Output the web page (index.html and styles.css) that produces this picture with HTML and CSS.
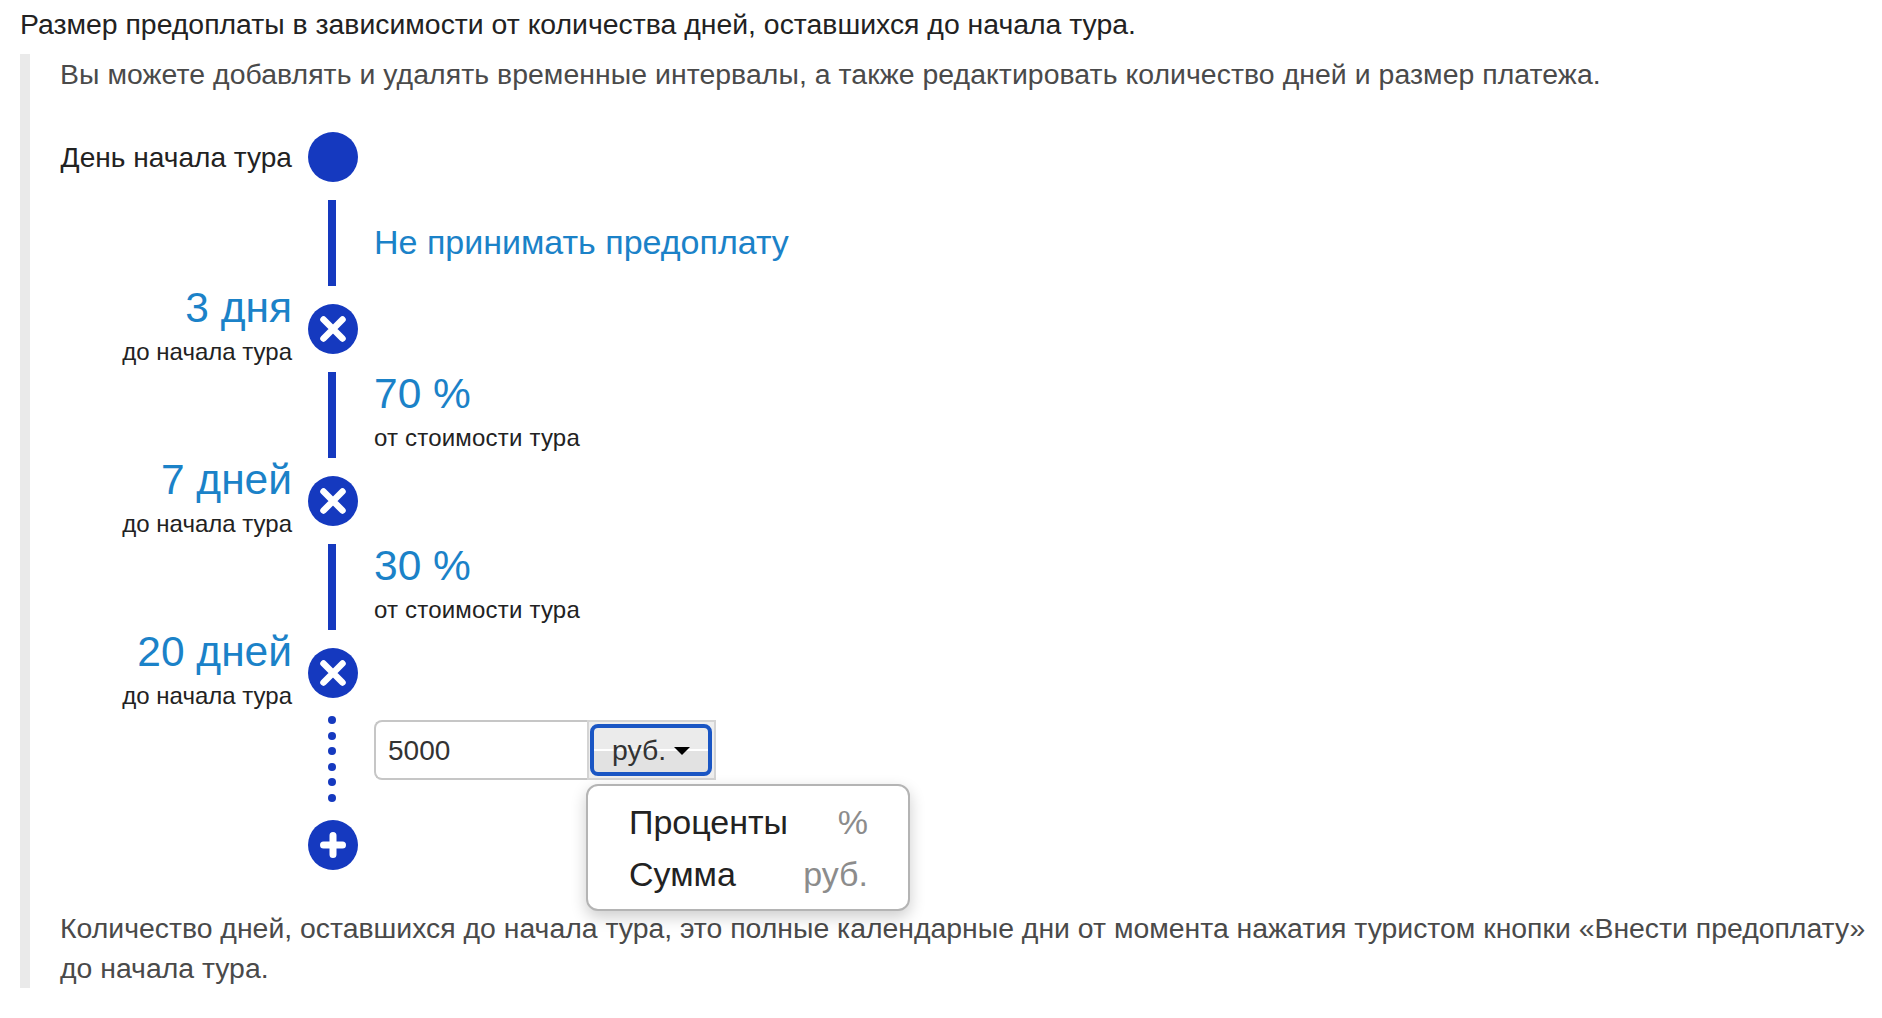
FILE: index.html
```html
<!DOCTYPE html>
<html lang="ru">
<head>
<meta charset="utf-8">
<title>Предоплата</title>
<link rel="stylesheet" href="styles.css">
</head>
<body>
<p class="lead">Размер предоплаты в зависимости от количества дней, оставшихся до начала тура.</p>
<div class="note">
  <p class="note-text note-intro">Вы можете добавлять и удалять временные интервалы, а также редактировать количество дней и размер платежа.</p>
  <div class="timeline">
    <div class="label"><span class="start-label">День начала тура</span></div>
    <div class="dot"></div>
    <div></div>

    <div></div>
    <div class="bar"></div>
    <div class="value"><a class="big-link small-link">Не принимать предоплату</a></div>

    <div class="label"><a class="big-link">3 дня</a><span class="sub">до начала тура</span></div>
    <div class="dot"><svg viewBox="0 0 50 50" class="icon"><path d="M15.500 15.500 34.500 34.500M34.500 15.500 15.500 34.500"/></svg></div>
    <div></div>

    <div></div>
    <div class="bar"></div>
    <div class="value"><a class="big-link">70 %</a><span class="sub sub-wide">от стоимости тура</span></div>

    <div class="label"><a class="big-link">7 дней</a><span class="sub">до начала тура</span></div>
    <div class="dot"><svg viewBox="0 0 50 50" class="icon"><path d="M15.500 15.500 34.500 34.500M34.500 15.500 15.500 34.500"/></svg></div>
    <div></div>

    <div></div>
    <div class="bar"></div>
    <div class="value"><a class="big-link">30 %</a><span class="sub sub-wide">от стоимости тура</span></div>

    <div class="label"><a class="big-link">20 дней</a><span class="sub">до начала тура</span></div>
    <div class="dot"><svg viewBox="0 0 50 50" class="icon"><path d="M15.500 15.500 34.500 34.500M34.500 15.500 15.500 34.500"/></svg></div>
    <div></div>

    <div></div>
    <div class="dots"><i></i><i></i><i></i><i></i><i></i><i></i></div>
    <div class="value">
      <div class="control">
        <div class="field">5000</div>
        <div class="select-wrap"><div class="select">руб.<span class="caret"></span></div></div>
        <div class="menu">
          <div class="menu-row"><span>Проценты</span><span class="muted">%</span></div>
          <div class="menu-row"><span>Сумма</span><span class="muted">руб.</span></div>
        </div>
      </div>
    </div>

    <div></div>
    <div class="dot"><svg viewBox="0 0 50 50" class="icon icon-plus"><path d="M25 15.500V34.500M15.500 25H34.500"/></svg></div>
    <div></div>
  </div>
  <p class="note-text foot">Количество дней, оставшихся до начала тура, это полные календарные дни от момента нажатия туристом кнопки «Внести предоплату» до начала тура.</p>
</div>
</body>
</html>
```
FILE: styles.css
```css
html, body { margin: 0; padding: 0; background: #fff; }
body {
  font-family: "Liberation Sans", Arial, sans-serif;
  font-size: 28.4px;
  line-height: 40px;
  color: #222;
  overflow: hidden;
  height: 1018px;
}
p { margin: 0; }
.lead { padding: 4px 0 0 20px; height: 54px; box-sizing: border-box; }
.note {
  margin-left: 20px;
  border-left: 10px solid #eaeaea;
  padding: 0 0 0 30px;
}
.note-text { color: #4a4a4a; width: 1812px; }
.note-intro { letter-spacing: .06px; }
.timeline {
  display: grid;
  grid-template-columns: 232px 82px 1fr;
  grid-template-rows: 50px 86px 50px 86px 50px 86px 50px 86px 50px;
  row-gap: 18px;
  margin: 38px 0 0 0;
  align-items: center;
}
.foot { margin-top: 38px; }
.label { text-align: right; display: flex; flex-direction: column; align-items: flex-end; }
.start-label { font-size: 28.100px; line-height: 40px; white-space: nowrap; margin-top: 2px; }
.big-link { color: #1b82c8; font-size: 42.500px; line-height: 46px; white-space: nowrap; }
.small-link { font-size: 34px; line-height: 40px; margin-bottom: 2px; }
.sub { font-size: 24px; line-height: 30px; margin: 6px 0 6px; white-space: nowrap; }
.sub-wide { letter-spacing: .2px; }
.dot {
  width: 50px; height: 50px;
  border-radius: 50%;
  background: #1539bf;
  margin-left: 16px;
}
.icon { display: block; width: 50px; height: 50px; fill: none; stroke: #fff; stroke-width: 6.500px; stroke-linecap: round; }
.icon-plus { stroke-width: 7px; }
.bar { width: 8px; height: 86px; background: #1539bf; margin-left: 36px; }
.dots { display: flex; flex-direction: column; justify-content: space-between; height: 86px; margin-left: 36px; }
.dots i { display: block; width: 8px; height: 8px; border-radius: 50%; background: #1539bf; }
.value { display: flex; flex-direction: column; align-items: flex-start; }
.control { display: flex; position: relative; height: 60px; margin: 0 0 19px 0; color: #333; }
.field {
  width: 213px; height: 60px; box-sizing: border-box;
  border: 2px solid #c6c6c6; border-right: 0;
  border-radius: 8px 0 0 8px;
  padding: 8px 12px;
  font-size: 28px;
  line-height: 42px;
}
.select-wrap {
  width: 129px; height: 60px; box-sizing: border-box;
  border: 2px solid #d4d4d4;
  background: #eee;
  padding: 2px 2px 2px 0;
}
.select {
  height: 52px; box-sizing: border-box;
  width: 122px;
  margin-left: 1px;
  border: 4px solid #1a56c4;
  border-radius: 8px;
  background: linear-gradient(#ebebeb 0 47%, #fff 47% 52%, #e2e2e2 52% 100%);
  line-height: 44px;
  text-align: center;
}
.caret {
  display: inline-block;
  width: 0; height: 0;
  border-left: 8px solid transparent; border-right: 8px solid transparent;
  border-top: 8px solid #000;
  margin-left: 8px;
  vertical-align: 5px;
}
.menu {
  position: absolute;
  left: 212px; top: 64px;
  width: 324px; height: 127px;
  box-sizing: border-box;
  background: #fff;
  border: 2px solid #b4b4b4;
  border-radius: 12px;
  box-shadow: 0 6px 16px rgba(0,0,0,.2);
  padding: 10px 40px 0 41px;
  font-size: 34px;
  line-height: 52px;
  color: #222;
}
.menu-row { display: flex; justify-content: space-between; }
.muted { color: #8c8c8c; }
```
